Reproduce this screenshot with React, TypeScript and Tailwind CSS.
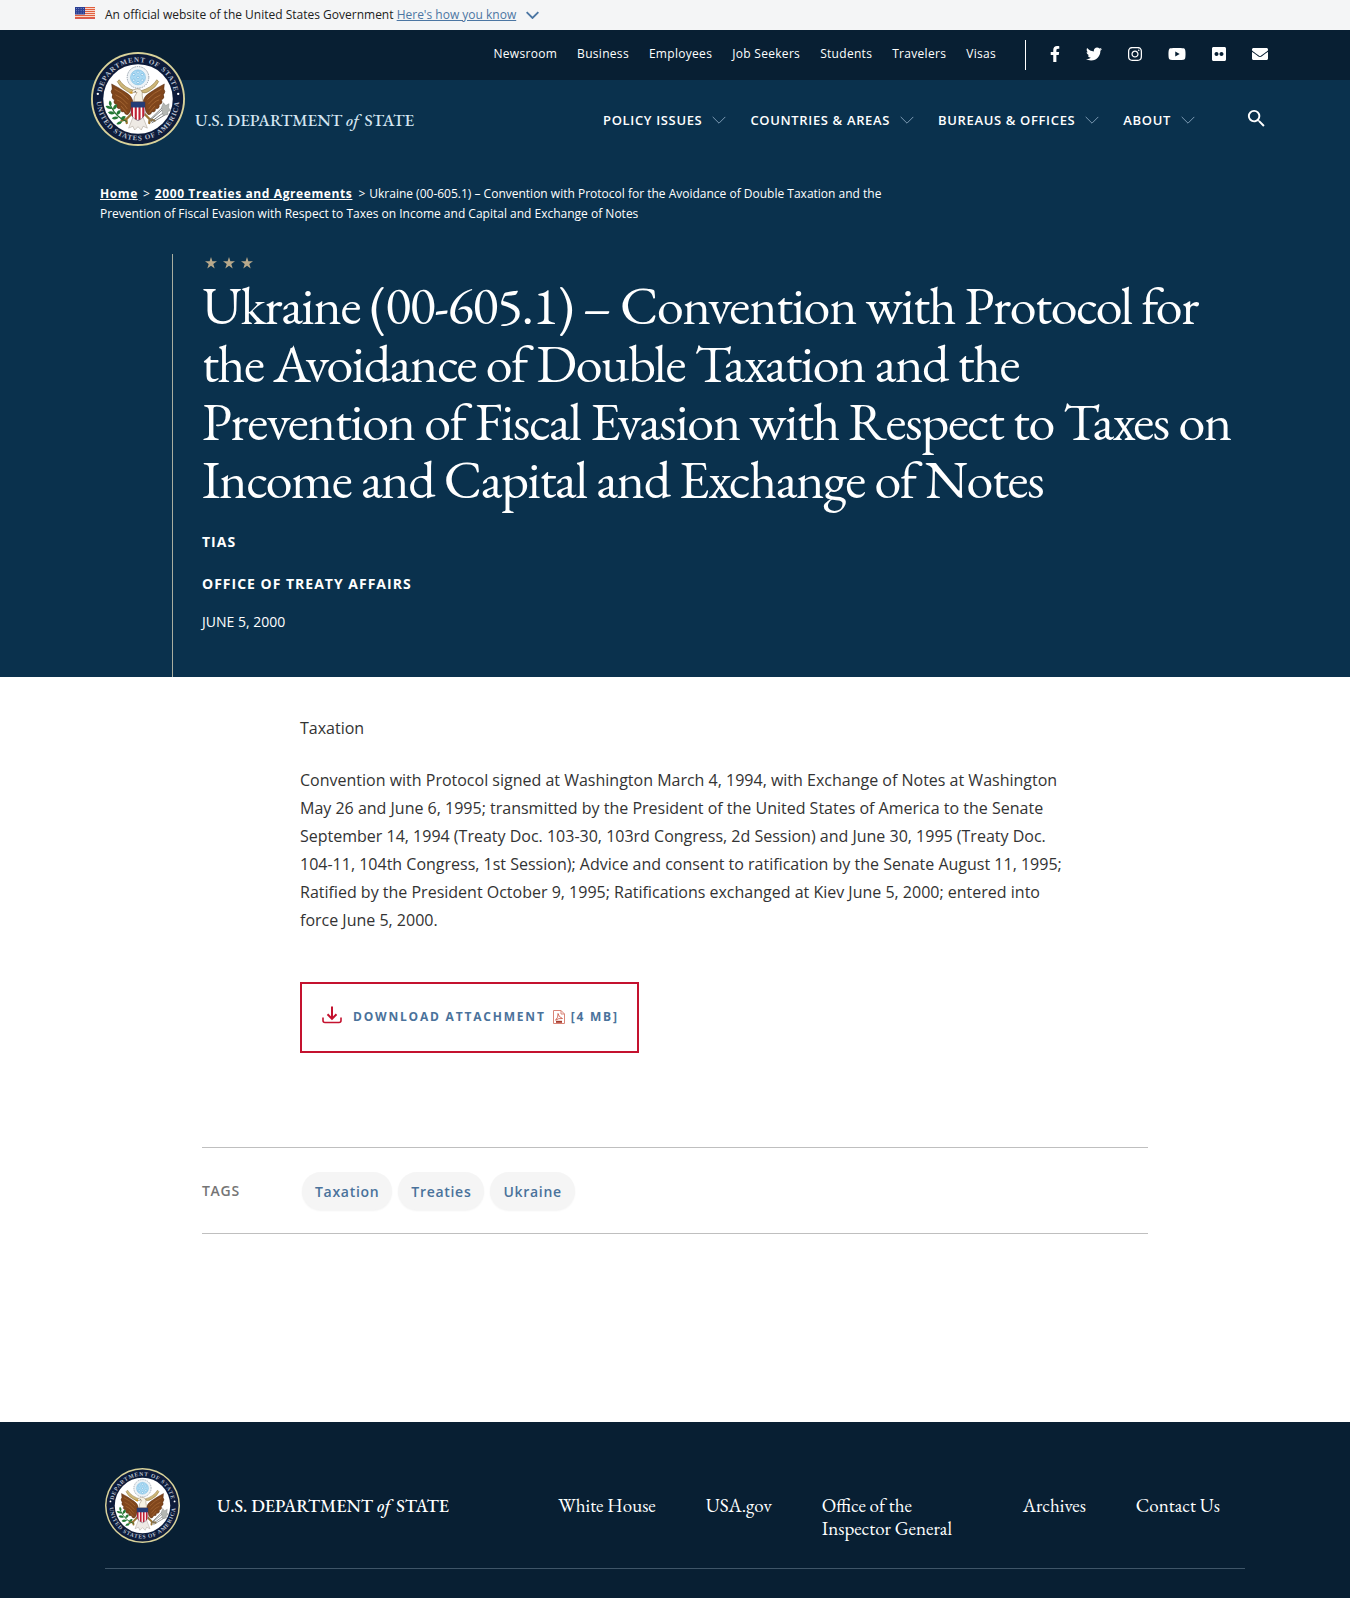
import React from "react";
import { FaEnvelope, FaFacebookF, FaFlickr, FaInstagram, FaTwitter, FaYoutube } from "react-icons/fa";
import { MdSearch } from "react-icons/md";

const topLinks = ["Newsroom", "Business", "Employees", "Job Seekers", "Students", "Travelers", "Visas"];
const menus = ["Policy Issues", "Countries & Areas", "Bureaus & Offices", "About"];
const socials = [
  { label: "Facebook", Icon: FaFacebookF, size: "h-4 w-[10px]" },
  { label: "Twitter", Icon: FaTwitter, size: "h-4 w-4" },
  { label: "Instagram", Icon: FaInstagram, size: "h-4 w-[14px]" },
  { label: "YouTube", Icon: FaYoutube, size: "h-4 w-[18px]" },
  { label: "Flickr", Icon: FaFlickr, size: "h-4 w-[14px]" },
  { label: "Email", Icon: FaEnvelope, size: "h-4 w-4" },
];
const tags = ["Taxation", "Treaties", "Ukraine"];

function Flag() {
  return (
    <svg className="h-3 w-5 shrink-0" viewBox="0 0 20 12" preserveAspectRatio="none" aria-hidden="true">
      <rect width="20" height="12" fill="#fbe3dc" />
      {[0, 2, 4, 6, 8, 10].map((y) => (
        <rect key={y} y={y} width="20" height="1.1" fill="#e0603f" />
      ))}
      <rect y="11.2" width="20" height="0.8" fill="#cf3a3a" />
      <rect width="10" height="7.5" fill="#2b3f94" />
      {[1.5, 3.7, 5.9].map((y) =>
        [1.5, 3.8, 6.1, 8.4].map((x) => <circle key={`${x}-${y}`} cx={x} cy={y} r="0.45" fill="#c5cdec" />)
      )}
    </svg>
  );
}

function Chevron({ className }: { className: string }) {
  return (
    <svg className={className} viewBox="0 0 14 8" fill="none" stroke="currentColor" aria-hidden="true">
      <path d="M0.7 0.9 7 7.2 13.3 0.9" />
    </svg>
  );
}

function Seal({ id, className }: { id: string; className: string }) {
  return (
    <svg className={className} viewBox="0 0 200 200" role="img" aria-label="Department of State seal">
      <defs>
        <path id={`${id}-top`} d="M22.5 108 A78 78 0 1 1 177.5 108" />
        <path id={`${id}-bottom`} d="M12 100 A88 88 0 0 0 188 100" />
        <clipPath id={`${id}-shield`}>
          <path d="M85 106 H115 V128 Q115 140 100 146 Q85 140 85 128 Z" />
        </clipPath>
      </defs>
      <circle cx="100" cy="100" r="100" fill="#d9d29a" />
      <circle cx="100" cy="100" r="96" fill="#0d1b3a" />
      <circle cx="100" cy="100" r="74" fill="#fff" />
      <g fill="#b9c0d0" fontFamily="'Liberation Serif', serif" fontSize="15" fontWeight="700">
        <text textAnchor="middle" letterSpacing="2">
          <textPath href={`#${id}-top`} startOffset="50%">DEPARTMENT OF STATE</textPath>
        </text>
        <text textAnchor="middle" letterSpacing="2">
          <textPath href={`#${id}-bottom`} startOffset="50%">UNITED STATES OF AMERICA</textPath>
        </text>
      </g>
      <circle cx="14.5" cy="89" r="2.5" fill="#fff" />
      <circle cx="185.5" cy="89" r="2.5" fill="#fff" />
      {/* Glory above the eagle */}
      <circle cx="100" cy="54" r="23" fill="#eef3f6" stroke="#8c97a3" strokeWidth="2" strokeDasharray="3 2" />
      <circle cx="100" cy="54" r="16" fill="#a9d9f3" stroke="#6fb3dc" />
      {[[100, 43], [91, 48], [109, 48], [100, 54], [91, 60], [109, 60], [100, 65]].map(([x, y]) => (
        <circle key={`${x}-${y}`} cx={x} cy={y} r="2.5" fill="#f0faff" stroke="#4f9fd2" strokeWidth="1" />
      ))}
      {/* Wings */}
      <path d="M44 68 Q60 76 77 88 Q88 95 89 107 L84 124 Q80 137 73 132 L70 127 Q62 129 63 121 Q53 121 55 112 Q46 110 50 102 Q42 98 46 91 Q40 84 45 79 Z" fill="#80461c" stroke="#4b260d" />
      <path d="M156 68 Q140 76 123 88 Q112 95 111 107 L116 124 Q120 137 127 132 L130 127 Q138 129 137 121 Q147 121 145 112 Q154 110 150 102 Q158 98 154 91 Q160 84 155 79 Z" fill="#80461c" stroke="#4b260d" />
      <path d="M50 79 Q66 86 80 101 M52 91 Q66 96 78 111 M55 102 Q67 105 77 121 M64 115 L76 129 M150 79 Q134 86 120 101 M148 91 Q134 96 122 111 M145 102 Q133 105 123 121 M136 115 L124 129" fill="none" stroke="#b0713a" strokeWidth="1.5" />
      {/* Scroll */}
      <path d="M60 59 Q70 76 95 83 Q87 91 76 83 Q61 75 56 63 Z" fill="#cdb678" stroke="#7b6029" />
      <path d="M140 59 Q130 76 105 83 Q113 91 124 83 Q139 75 144 63 Z" fill="#cdb678" stroke="#7b6029" />
      {/* Head and neck */}
      <path d="M91 106 Q90 95 98 86 Q89 86 84 88 Q87 79 98 78 Q111 79 109 92 L111 106 Z" fill="#f5f1e4" stroke="#816b4c" />
      <path d="M88 83 L80 87 L88 89 Z" fill="#d69a20" />
      <circle cx="94" cy="84" r="1.2" fill="#222" />
      {/* Tail and talons */}
      <path d="M90 137 L110 137 L120 162 L111 158 L107 166 L100 159 L93 166 L89 158 L80 162 Z" fill="#eeeae5" stroke="#9d9185" />
      <path d="M86 132 L75 143 L65 146 M75 143 L76 151 M114 132 L125 143 L135 146 M125 143 L124 151" fill="none" stroke="#9b7432" strokeWidth="5" strokeLinecap="round" />
      {/* Olive branch */}
      <path d="M76 148 Q54 140 42 115" fill="none" stroke="#256a2e" strokeWidth="2.5" />
      <path d="M42 116q-7-6-2-13q7 5 2 13M45 121q-11 2-14-6q10-2 14 6M47 123q-1-11 8-12q2 9-8 12M51 131q-10 5-15-3q9-5 15 3M54 134q0-11 9-10q1 9-9 10M59 140q-8 7-15 1q7-7 15-1M63 143q3-9 11-6q-2 8-11 6M67 148q-5 9-13 5q4-8 13-5" fill="#247a35" />
      {/* Arrows */}
      <path d="M124 147 L160 116 M127 149 L164 122 M129 151 L162 131 M125 144 L154 116" stroke="#777b7b" strokeWidth="2" />
      <path d="M150 118l4-10 5 6 7-4-1 9 5 5-7 3 1 6-11 2z" fill="#b4b7b3" stroke="#85898a" />
      {/* Shield */}
      <g clipPath={`url(#${id}-shield)`}>
        <rect x="84" y="105" width="32" height="43" fill="#fff" />
        {[85, 93, 101, 109].map((x) => (
          <rect key={x} x={x} y="112" width="4.5" height="36" fill="#bf2034" />
        ))}
        <rect x="84" y="105" width="32" height="13" fill="#233d78" />
      </g>
      <path d="M85 106 H115 V128 Q115 140 100 146 Q85 140 85 128 Z" fill="none" stroke="#42344e" />
    </svg>
  );
}

function DownloadIcon() {
  return (
    <svg className="h-[18px] w-5 shrink-0" viewBox="0 0 20 18" fill="none" stroke="#c4122f" strokeWidth="2" aria-hidden="true">
      <path d="M10 0.5V12.5M5.5 8.3 10 12.8 14.5 8.3" />
      <path d="M1 11.5V14.5Q1 16.5 3 16.5H17Q19 16.5 19 14.5V11.5" strokeWidth="1.6" />
    </svg>
  );
}

function PdfIcon() {
  return (
    <svg className="h-[14px] w-3 shrink-0" viewBox="0 0 12 14" fill="none" stroke="#d98578" aria-hidden="true">
      <path d="M0.5 0.5H8L11.5 4V13.5H0.5Z" fill="#fff" />
      <path d="M8 0.5V4H11.5" />
      <path d="M5 3.5Q5.5 7 9.5 8.5Q5.5 8 2.5 10.2Q5.5 7.5 5 3.5Z" stroke="#c8503f" strokeWidth=".8" />
      <path d="M3 11.8H9" stroke="#a83a2c" strokeWidth="2" />
    </svg>
  );
}

function Wordmark({ className }: { className: string }) {
  return (
    <span className={className}>
      U.S. DEPARTMENT <em className="mr-[2px]">of</em> STATE
    </span>
  );
}

export default function App() {
  return (
    <div className="min-h-screen bg-white font-['Open_Sans',sans-serif] text-[#212121]">
      <div className="bg-[#f4f5f6]">
        <div className="mx-auto flex h-[30px] max-w-[1200px] items-center text-xs">
          <div className="-mt-1 flex"><Flag /></div>
          <p className="ml-[10px]">
            An official website of the United States Government{" "}
            <button type="button" className="text-[#4c76a3] underline">Here's how you know</button>
          </p>
          <Chevron className="ml-[10px] h-2 w-[13px] stroke-2 text-[#4c76a3]" />
        </div>
      </div>

      <header className="bg-[#0a314d] text-white">
        <div className="bg-[#081f33]">
          <div className="mx-auto flex h-[50px] max-w-[1200px] items-center justify-end pr-[7px]">
            <nav aria-label="Secondary" className="flex gap-5 pb-[2px] text-xs tracking-wide">
              {topLinks.map((t) => <a key={t} href="#">{t}</a>)}
            </nav>
            <div className="ml-[29px] h-[30px] w-px bg-white" />
            <div className="ml-6 flex items-center gap-[26px] pb-[2px]">
              {socials.map(({ label, Icon, size }) => (
                <a key={label} href="#" aria-label={label}><Icon className={size} /></a>
              ))}
            </div>
          </div>
        </div>

        <div className="mx-auto flex max-w-[1200px] items-start justify-between pr-[7px] pl-4">
          <a href="#" className="-mt-7 flex items-end">
            <Seal id="header-seal" className="size-[94px]" />
            <Wordmark className="mb-[14px] ml-[10px] font-['EB_Garamond','Liberation_Serif',serif] text-[17px] leading-6 font-medium whitespace-nowrap text-[#d5e6f2]" />
          </a>
          <nav aria-label="Main" className="flex items-center pt-[27px]">
            <div className="flex gap-6">
              {menus.map((m) => (
                <button key={m} type="button" className="flex items-center gap-[10px] text-[13px] leading-6 font-semibold tracking-wider whitespace-nowrap uppercase">
                  {m}
                  <Chevron className="h-2 w-[14px] text-[#7d9bb3]" />
                </button>
              ))}
            </div>
            <button type="button" aria-label="Search" className="ml-[50px] pb-[2px]"><MdSearch className="size-[23px]" /></button>
          </nav>
        </div>

        <div className="mx-auto max-w-[1150px] pt-[38px]">
          <nav aria-label="Breadcrumb" className="max-w-[800px] text-xs leading-5">
            <a href="#" className="font-bold tracking-wider underline">Home</a>
            <span className="mx-[5px]">&gt;</span>
            <a href="#" className="font-bold tracking-wider underline">2000 Treaties and Agreements</a>
            <span className="mr-1 ml-[6px]">&gt;</span>
            Ukraine (00-605.1) – Convention with Protocol for the Avoidance of Double Taxation and the Prevention of Fiscal Evasion with Respect to Taxes on Income and Capital and Exchange of Notes
          </nav>
          <div className="mt-[30px] ml-[72px] border-l border-[#a9aea0] pb-[43px] pl-[29px]">
            <svg className="ml-[3px] h-[18px] w-12" viewBox="0 0 48 18" fill="#b9a98b" aria-hidden="true">
              {[0, 18, 36].map((x) => (
                <path key={x} transform={`translate(${x} 3)`} d="M6 0 7.4 4.3H12L8.3 7 9.7 11.4 6 8.7 2.3 11.4 3.7 7 0 4.3H4.6Z" />
              ))}
            </svg>
            <h1 className="mt-1 font-['EB_Garamond','Liberation_Serif',serif] text-[54px] leading-[58px] tracking-tight">
              Ukraine (00-605.1) – Convention with Protocol for the Avoidance of Double Taxation and the Prevention{"\u00a0"}of Fiscal Evasion with Respect to Taxes on Income and Capital and Exchange of Notes
            </h1>
            <p className="mt-[22px] text-sm leading-6 font-bold tracking-[1px]">TIAS</p>
            <p className="mt-[18px] text-sm leading-6 font-bold tracking-[1px]">OFFICE OF TREATY AFFAIRS</p>
            <p className="mt-[14px] text-sm leading-6">JUNE 5, 2000</p>
          </div>
        </div>
      </header>

      <main className="mx-auto max-w-[946px] pt-[37px] pb-[188px]">
        <article className="pr-[84px] pl-[98px] text-base leading-7 text-[#333]">
          <p>Taxation</p>
          <p className="mt-6">
            Convention with Protocol signed at Washington March 4, 1994, with Exchange of Notes at Washington May 26 and June 6, 1995; transmitted by the President of the United States of America to the Senate September 14, 1994 (Treaty Doc. 103-30, 103rd Congress, 2d Session) and June 30, 1995 (Treaty Doc. 104-11, 104th Congress, 1st Session); Advice and consent to ratification by the Senate August 11, 1995; Ratified by the President October 9, 1995; Ratifications exchanged at Kiev June 5, 2000; entered into force June 5, 2000.
          </p>
          <a href="#" className="mt-12 inline-flex h-[71px] items-center border-2 border-[#c4122f] pr-[18px] pb-[2px] pl-5 text-xs font-bold tracking-[0.15em] text-[#4a729b]">
            <span className="pb-1"><DownloadIcon /></span>
            <span className="ml-[11px]">DOWNLOAD ATTACHMENT</span>
            <span className="ml-[7px]"><PdfIcon /></span>
            <span className="ml-[6px]">[4 MB]</span>
          </a>
        </article>

        <section aria-label="Tags" className="mt-[94px] flex items-center border-y border-[#bfbfbf] pt-6 pb-[23px]">
          <h2 className="w-[100px] text-sm font-semibold tracking-wider text-[#757575]">TAGS</h2>
          <ul className="flex gap-[6px]">
            {tags.map((t) => (
              <li key={t}>
                <a href="#" className="block rounded-full bg-[#f5f5f5] px-[13px] pt-[9px] pb-[7px] text-sm leading-[22px] font-semibold tracking-wider text-[#4a729b] shadow-xs">{t}</a>
              </li>
            ))}
          </ul>
        </section>
      </main>

      <footer className="bg-[#081f33] pb-[29px] text-white">
        <div className="mx-auto flex max-w-[1140px] items-start border-b border-[#3f5568] pt-[46px] pb-[25px]">
          <Seal id="footer-seal" className="size-[75px] shrink-0" />
          <Wordmark className="mt-[26px] ml-[37px] font-['EB_Garamond','Liberation_Serif',serif] text-lg leading-[23px] font-medium whitespace-nowrap" />
          <nav aria-label="Footer" className="mt-[26px] ml-auto flex gap-[50px] pr-[25px] font-['EB_Garamond','Liberation_Serif',serif] text-[19px] leading-[23px] whitespace-nowrap">
            <a href="#">White House</a>
            <a href="#">USA.gov</a>
            <a href="#" className="w-[151px] whitespace-normal">Office of the Inspector General</a>
            <a href="#">Archives</a>
            <a href="#">Contact Us</a>
          </nav>
        </div>
      </footer>
    </div>
  );
}
